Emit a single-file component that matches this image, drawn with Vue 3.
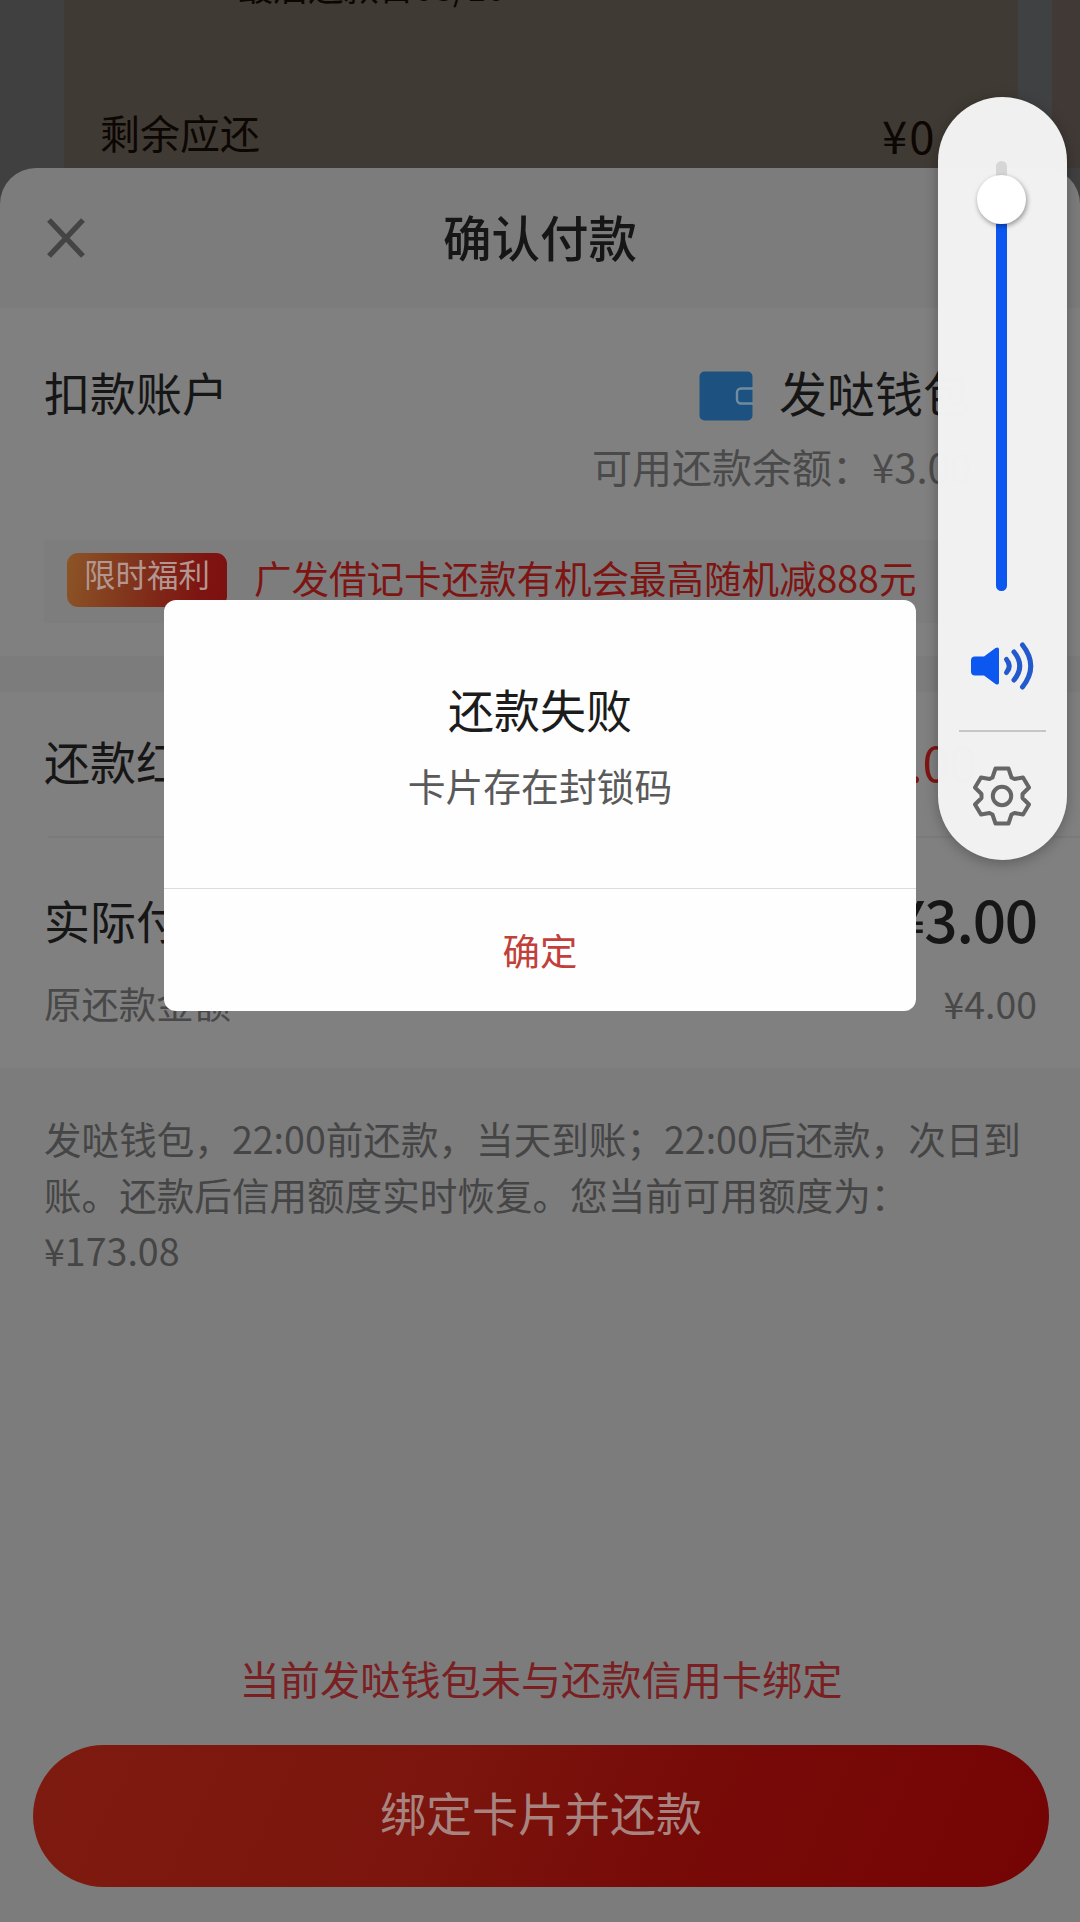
<script setup>
const amounts = {
  remaining: '¥0.00',
  balance: '¥3.00',
  coupon: '-¥1.00',
  actual: '¥3.00',
  original: '¥4.00',
}
</script>

<template>
  <div class="screen">
    <div class="backdrop">
      <div class="bill">
        <div class="due">最后还款日08/10</div>
        <div class="remain">
          <span>剩余应还</span>
          <span class="remain-num">{{ amounts.remaining }}</span>
        </div>
      </div>
      <div class="gap"></div>
      <div class="bill-next"></div>
    </div>

    <main class="sheet">
      <header class="head">
        <svg class="close" width="40" height="42" viewBox="0 0 40 42">
          <path d="M3 3 37 39M37 3 3 39" fill="none" stroke="#444" stroke-width="5.4" />
        </svg>
        <h1>确认付款</h1>
      </header>

      <section class="account">
        <div class="row account-row">
          <span class="label">扣款账户</span>
          <span class="wallet">
            <svg width="54" height="50" viewBox="0 0 54 50">
              <rect x="0.5" y="0.5" width="53" height="49" rx="5" fill="#1d5280" />
              <path d="M54 17.5H42a4 4 0 0 0-4 4v7a4 4 0 0 0 4 4h12" fill="none" stroke="#718ca0" stroke-width="2.4" />
            </svg>
            <span>发哒钱包</span>
          </span>
        </div>
        <div class="balance">可用还款余额：{{ amounts.balance }}</div>
        <div class="promo">
          <span class="badge">限时福利</span>
          <span class="promo-text">广发借记卡还款有机会最高随机减888元</span>
        </div>
      </section>

      <section class="coupon row">
        <span class="label">还款红包</span>
        <span class="coupon-num">{{ amounts.coupon }}</span>
      </section>

      <section class="pay">
        <div class="row pay-row">
          <span class="label">实际付款</span>
          <span class="pay-num">{{ amounts.actual }}</span>
        </div>
        <div class="row origin-row">
          <span>原还款金额</span>
          <span>{{ amounts.original }}</span>
        </div>
      </section>

      <p class="note">发哒钱包，22:00前还款，当天到账；22:00后还款，次日到账。还款后信用额度实时恢复。您当前可用额度为：¥173.08</p>

      <footer class="foot">
        <div class="warn">当前发哒钱包未与还款信用卡绑定</div>
        <button class="submit">绑定卡片并还款</button>
      </footer>
    </main>

    <div class="dialog">
      <div class="dialog-body">
        <div class="dialog-title">还款失败</div>
        <div class="dialog-msg">卡片存在封锁码</div>
      </div>
      <div class="dialog-ok">确定</div>
    </div>

    <aside class="volume">
      <div class="track"><div class="fill"></div><div class="knob"></div></div>
      <svg class="speaker" width="66" height="52" viewBox="0 0 66 52">
        <path d="M5 16.500h9L25.500 8q3.500-1.500 3.500 1.500v33q0 3-3.500 1.500L14 35.500H5q-4 0-4-4v-11q0-4 4-4z" fill="#0b57f0" />
        <g fill="none" stroke="#2259cc" stroke-width="5" stroke-linecap="round">
          <path d="M36.500 19.500q5.500 6.500 0 13" />
          <path d="M44 12q11.500 14 0 28" />
          <path d="M52.500 5q16.500 21 0 42" />
        </g>
      </svg>
      <div class="sep"></div>
      <svg class="gear" width="60" height="62" viewBox="-30 -31 60 62">
        <path d="M-6.500-27.500H6.500L9.500-18.500 12.500-17 21-18.500 27-8.500 20.500-2V2L27 8.500 21 18.500 12.500 17 9.500 18.500 6.500 27.500H-6.500L-9.500 18.500-12.500 17-21 18.500-27 8.500-20.500 2V-2L-27-8.500-21-18.500-12.500-17-9.500-18.500Z" fill="none" stroke="#666" stroke-width="4" stroke-linejoin="round" />
        <circle r="9.200" fill="none" stroke="#666" stroke-width="4" />
      </svg>
    </aside>
  </div>
</template>

<style>
body {
  margin: 0;
  background: #404040;
}
</style>

<style scoped>
.screen {
  position: relative;
  width: 1080px;
  height: 1922px;
  overflow: hidden;
  background: #404040;
  color: #161616;
  font-family: "Noto Sans CJK SC", sans-serif;
  white-space: nowrap;
}
.backdrop {
  display: flex;
  height: 168px;
}
.bill {
  box-sizing: border-box;
  width: 954px;
  margin-left: 64px;
  padding: 0 37px 0 36px;
  background: #403a34;
  color: #0d0704;
}
.due {
  height: 108px;
  margin-left: 138px;
  font-size: 35.2px;
  line-height: 40px;
  margin-top: -34px;
}
.remain {
  display: flex;
  justify-content: space-between;
  align-items: center;
  height: 60px;
  margin-top: 28px;
  font-size: 40px;
}
.remain-num {
  font-size: 45.5px;
  width: 99px;
  padding-top: 4px;
  letter-spacing: 2px;
}
.gap {
  width: 34px;
  background: #404142;
}
.bill-next {
  flex: 1;
  background: #403936;
}
.sheet {
  display: flex;
  flex-direction: column;
  height: 1754px;
  border-radius: 36px 36px 0 0;
  background: #7c7c7c;
  overflow: hidden;
}
.head {
  display: grid;
  grid-template-columns: 200px 1fr 200px;
  align-items: center;
  height: 140px;
}
.close {
  margin-left: 46px;
}
h1 {
  margin: 0;
  padding-bottom: 5px;
  font-size: 48.5px;
  font-weight: 500;
  line-height: 60px;
  text-align: center;
}
.account {
  box-sizing: border-box;
  height: 348px;
  padding: 53px 44px 0;
  background: #808080;
}
.row {
  display: flex;
  justify-content: space-between;
  align-items: center;
}
.label {
  font-size: 46px;
}
.account-row {
  height: 60px;
  line-height: 60px;
}
.wallet {
  display: flex;
  align-items: center;
  gap: 26px;
  margin-right: 65px;
  font-size: 48px;
}
.wallet svg {
  margin-top: 10px;
}
.balance {
  margin: 20px 64px 0 0;
  font-size: 40px;
  line-height: 50px;
  text-align: right;
  color: #4a4a4a;
}
.promo {
  display: flex;
  align-items: center;
  height: 83px;
  margin-top: 49px;
  background: #7d7d7e;
}
.badge {
  box-sizing: border-box;
  width: 160px;
  height: 54px;
  margin-left: 23px;
  margin-bottom: 3px;
  border-radius: 11px;
  background: linear-gradient(100deg, #8c5526, #81351c 40%, #7e1411 82%, #7c100f);
  color: #b39691;
  font-size: 31.5px;
  line-height: 41px;
  text-align: center;
}
.promo-text {
  margin-left: 27px;
  padding-bottom: 10px;
  font-size: 37.5px;
  color: #7d1513;
}
.coupon {
  box-sizing: border-box;
  height: 146px;
  margin-top: 36px;
  padding: 0 103px 10px 44px;
  background: linear-gradient(#7a7a7a, #7a7a7a) 48px 100% / 100% 2px no-repeat #808080;
}
.coupon-num {
  font-size: 49px;
  color: #7d1513;
}
.pay {
  box-sizing: border-box;
  height: 230px;
  padding: 46px 43px 0 44px;
  background: #808080;
}
.pay-row {
  height: 70px;
}
.pay-num {
  font-size: 58.5px;
  font-weight: 500;
  line-height: 70px;
  letter-spacing: -1.2px;
  padding-bottom: 2px;
}
.origin-row {
  height: 50px;
  margin-top: 24px;
  font-size: 37.4px;
  color: #484848;
}
.note {
  margin: 42px 50px 0 44px;
  font-size: 37.6px;
  line-height: 56px;
  color: #454545;
  white-space: normal;
}
.foot {
  margin-top: auto;
  padding: 0 31px 35px 33px;
}
.warn {
  margin-bottom: 42px;
  font-size: 40.2px;
  line-height: 50px;
  text-align: center;
  color: #7a2022;
}
.submit {
  display: block;
  width: 100%;
  height: 142px;
  padding: 0 0 10px;
  border: 0;
  border-radius: 71px;
  background: linear-gradient(115deg, #7e1b10, #7b150d 40%, #770b08 62%, #750404);
  color: #a88480;
  font: 46px "Noto Sans CJK SC", sans-serif;
}
.dialog {
  position: absolute;
  left: 164px;
  top: 600px;
  width: 752px;
  height: 411px;
  border-radius: 12px;
  background: #fefefe;
  text-align: center;
}
.dialog-body {
  box-sizing: border-box;
  height: 289px;
  padding-top: 78px;
  border-bottom: 1px solid #dcdcdc;
}
.dialog-title {
  font-size: 46px;
  line-height: 60px;
  color: #1c1c1c;
}
.dialog-msg {
  margin-top: 22px;
  font-size: 37.8px;
  line-height: 50px;
  color: #5a5a5a;
}
.dialog-ok {
  font-size: 37.4px;
  line-height: 123px;
  color: #c2403a;
}
.volume {
  position: absolute;
  left: 938px;
  top: 97px;
  box-sizing: border-box;
  display: flex;
  flex-direction: column;
  align-items: center;
  width: 129px;
  height: 763px;
  padding-top: 64px;
  border-radius: 65px;
  background: rgba(242, 242, 242, 0.994);
  box-shadow: 0 3px 14px rgba(0, 0, 0, 0.28);
}
.track {
  position: relative;
  width: 11px;
  height: 430px;
  margin-right: 2px;
  border-radius: 6px;
  background: #d6d6d6;
}
.fill {
  position: absolute;
  inset: 39px 0 0;
  border-radius: 6px;
  background: #0b57f0;
}
.knob {
  position: absolute;
  left: -19px;
  top: 14px;
  width: 49px;
  height: 49px;
  border-radius: 50%;
  background: #fff;
  box-shadow: 1px 2px 5px rgba(0, 0, 0, 0.4);
}
.speaker {
  margin: 49px 0 0 1px;
}
.sep {
  width: 87px;
  height: 2px;
  margin-top: 38px;
  background: #c6c6c6;
}
.gear {
  margin: 33px 2px 0 0;
}
</style>
